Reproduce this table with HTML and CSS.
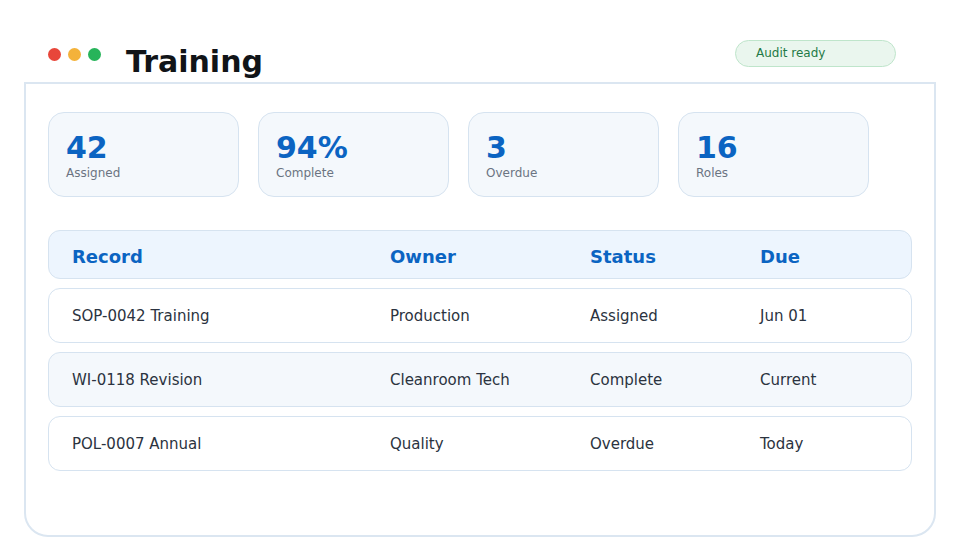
FILE: index.html
```html
<!DOCTYPE html>
<html lang="en">
<head>
<meta charset="utf-8">
<title>Training</title>
<link rel="stylesheet" href="styles.css">
</head>
<body>
<header class="top">
  <div class="dots">
    <span class="dot red"></span>
    <span class="dot amber"></span>
    <span class="dot green"></span>
  </div>
  <h1 class="title">Training</h1>
  <span class="badge">Audit ready</span>
</header>
<main class="panel">
  <section class="stats">
    <div class="stat"><div class="num">42</div><div class="lbl">Assigned</div></div>
    <div class="stat"><div class="num">94%</div><div class="lbl">Complete</div></div>
    <div class="stat"><div class="num">3</div><div class="lbl">Overdue</div></div>
    <div class="stat"><div class="num">16</div><div class="lbl">Roles</div></div>
  </section>
  <section class="table">
    <div class="row head"><span>Record</span><span>Owner</span><span>Status</span><span>Due</span></div>
    <div class="row"><span>SOP-0042 Training</span><span>Production</span><span>Assigned</span><span>Jun 01</span></div>
    <div class="row alt"><span>WI-0118 Revision</span><span>Cleanroom Tech</span><span>Complete</span><span>Current</span></div>
    <div class="row"><span>POL-0007 Annual</span><span>Quality</span><span>Overdue</span><span>Today</span></div>
  </section>
</main>
</body>
</html>
```
FILE: styles.css
```css
* { box-sizing: border-box; }
html, body { margin: 0; padding: 0; background: #ffffff; }
body {
  width: 960px;
  height: 560px;
  font-family: "DejaVu Sans", "Noto Sans", sans-serif;
  color: #2b3340;
  overflow: hidden;
}
.top {
  height: 82px;
  display: flex;
  align-items: flex-start;
  padding: 40px 64px 0 48px;
}
.dots { display: flex; gap: 7px; margin-top: 8px; }
.dot { width: 13px; height: 13px; border-radius: 50%; display: block; }
.red { background: #e8463a; }
.amber { background: #f4b23a; }
.green { background: #27b45a; }
.title {
  margin: 4px 0 0 25px;
  font-size: 30px;
  line-height: 35px;
  font-weight: bold;
  color: #111418;
}
.badge {
  margin-left: auto;
  width: 161px;
  height: 27px;
  border-radius: 14px;
  background: #eaf6ee;
  border: 1px solid #bfe5cb;
  color: #1f7a46;
  font-size: 12px;
  line-height: 25px;
  padding-left: 20px;
}
.panel {
  margin: 0 24px;
  height: 455px;
  border: 2px solid #dbe6f1;
  border-radius: 0 0 24px 24px;
  padding: 28px 22px 0 22px;
}
.stats { display: flex; gap: 19px; }
.stat {
  width: 191px;
  height: 85px;
  border: 1px solid #d6e3f0;
  border-radius: 16px;
  background: #f4f8fc;
  padding: 18px 17px 0 17px;
}
.num {
  font-size: 30px;
  line-height: 34px;
  font-weight: bold;
  color: #0b64c2;
}
.lbl {
  margin-top: 0;
  font-size: 12px;
  line-height: 16px;
  color: #6b7482;
}
.table { margin-top: 33px; display: flex; flex-direction: column; gap: 9px; }
.row {
  display: grid;
  grid-template-columns: 318px 200px 170px 1fr;
  align-items: center;
  height: 55px;
  padding: 0 23px;
  border: 1px solid #d6e3f0;
  border-radius: 12px;
  background: #ffffff;
  font-size: 15px;
  color: #2b3340;
}
.row.alt { background: #f4f8fc; }
.row.head {
  height: 49px;
  padding-top: 4px;
  background: #edf5fe;
  font-size: 18px;
  font-weight: bold;
  color: #0b64c2;
}
```
